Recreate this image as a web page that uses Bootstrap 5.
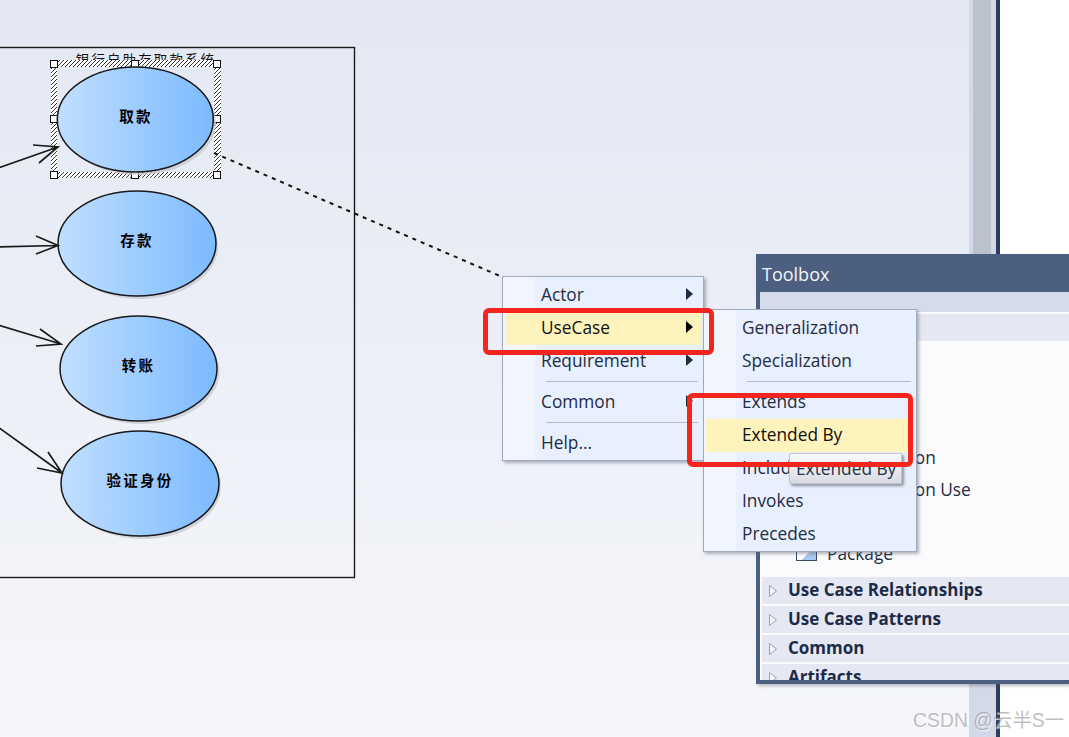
<!DOCTYPE html>
<html lang="zh">
<head>
<meta charset="utf-8">
<title>Toolbox</title>
<link href="https://cdn.jsdelivr.net/npm/bootstrap@5.3.0/dist/css/bootstrap.min.css" rel="stylesheet">
<style>
html,body{margin:0;height:100%;overflow:hidden;background:#fff}
.stage{width:1069px;height:737px;overflow:hidden;font-family:"Open Sans","Noto Sans",sans-serif;color:#1f2c46}
.canvas-pane{width:969px;background:linear-gradient(180deg,#e3e8f3 0%,#f6f7fb 100%)}
.scroll-pane{width:27px;background:#d3d9e8}
.scroll-thumb{width:18px;height:680px;margin-left:4px;background:#bcc2cd}
.dark-rule{width:4px;background:#2c3e5e}
.white-pane{background:#fff}
.diagram{left:0;top:0}
.ctx{background:linear-gradient(90deg,#f1f5fe 0,#f1f5fe var(--strip),#e8effd var(--strip));border:1px solid #a1aabc;box-shadow:2px 2px 3px rgba(90,95,110,.45);font-size:17.3px;padding:2px}
.ctx-one{left:502px;top:276px;width:202px;height:185px;--strip:32px}
.ctx-two{left:703px;top:309px;width:214px;height:243px;--strip:32px}
.ctx-item{height:33px;padding:0 8px 1px 36px;line-height:32px;white-space:nowrap}
.ctx-item.on{background:#fdf3bd;color:#101010}
.ctx-sep{height:8px;margin:0 3px 0 41px;padding-top:3px}
.ctx-sep::after{content:"";display:block;height:1px;background:#b4bbcb}
.ctx-arrow{width:0;height:0;margin-bottom:2px;border-left:7px solid #1f2c46;border-top:6.5px solid transparent;border-bottom:6.5px solid transparent}
.on .ctx-arrow{border-left-color:#000}
.mark-box{border:5px solid #f5241c;border-radius:6px}
.mark-a{left:483px;top:308px;width:231px;height:47px}
.mark-b{left:687px;top:393px;width:226px;height:74px}
.tip{left:789px;top:453px;width:113px;height:31px;background:linear-gradient(180deg,#fafafb,#d9dbe2);border:1px solid #c4c7cf;box-shadow:2px 2px 3px rgba(70,70,80,.55);font-size:17.3px;line-height:30px;padding-left:6px;color:#26324a;white-space:nowrap;border-radius:2px}
.toolbox{left:756px;top:254px;width:313px;height:430px;background:#4d5f80;box-shadow:2px 2px 3px rgba(90,95,110,.4);padding:0 0 4px 4px}
.tb-title{height:38px;color:#f2f4f8;font-size:18px;line-height:41px;padding-left:2px}
.tb-inner{background:#fbfbfd;overflow:hidden}
.tb-strip{height:20px;background:#d5dbe8;margin-bottom:2px}
.tb-band{height:27px;background:#e5e8f2;flex:none}
.tb-list{height:236px;flex:none;font-size:17.3px;padding-left:67px}
.tb-row{height:32px;line-height:32px;white-space:nowrap}
.tb-spacer{height:101px}
.tb-pkg{position:relative}
.tb-pkgicon{left:-31px;top:12px;width:21px;height:11px;border:1px solid #3c4a66;border-top:0;background:linear-gradient(135deg,#fff 50%,#a9c8ee 50%)}
.tb-group{height:27px;margin:0 0 2px 2px;padding:0 0 2px 7px;background:#e5e8f2;flex:none;font-weight:700;font-size:17px;color:#1c2b49;gap:11px;white-space:nowrap}
.tb-tri{width:8px;height:12px;flex:none;margin-top:2px}
.mark-wm{left:913px;top:706px;font-family:"Liberation Sans","Noto Sans CJK SC",sans-serif;font-size:19.4px;color:rgba(130,130,130,.5);text-shadow:1px 1px 1px rgba(255,255,255,.8);white-space:nowrap}
.uc-label{font-family:"Noto Sans CJK SC",sans-serif;font-weight:700;font-size:14.5px;letter-spacing:2.2px;text-anchor:middle;fill:#000}
.sys-label{font-family:"Noto Sans CJK SC",sans-serif;font-size:13.5px;letter-spacing:2.1px;text-anchor:middle;fill:#111}
</style>
</head>
<body>
<div class="stage position-relative d-flex">
  <div class="canvas-pane position-relative flex-shrink-0"></div>
  <div class="scroll-pane flex-shrink-0"><div class="scroll-thumb"></div></div>
  <div class="dark-rule flex-shrink-0"></div>
  <div class="white-pane flex-grow-1"></div>

  <svg class="diagram position-absolute" width="969" height="737" viewBox="0 0 969 737">
    <defs>
      <linearGradient id="ucg" x1="0" x2="1" y1="0" y2="0"><stop offset="0" stop-color="#c0dfff"/><stop offset="1" stop-color="#7cbaff"/></linearGradient>
      <pattern id="hatch" width="4" height="4" patternUnits="userSpaceOnUse"><rect width="4" height="4" fill="#fff"/><path d="M-1 1L1 -1M0 4L4 0M3 5L5 3" stroke="#222" stroke-width=".9"/></pattern>
    </defs>
    <rect x="-5" y="47.5" width="359.5" height="530" fill="none" stroke="#1a1a1a" stroke-width="1.4"/>
    <text class="sys-label" x="146" y="65">银行自助存取款系统</text>
    <path d="M51 60H221V178H51Z M57 67V172H214V67Z" fill="url(#hatch)" fill-rule="evenodd"/>
    <g fill="#fff" stroke="#111" stroke-width="1">
      <rect x="50.5" y="60.5" width="7" height="7"/><rect x="131.5" y="60.5" width="7" height="7"/><rect x="213.5" y="60.5" width="7" height="7"/>
      <rect x="50.5" y="115.5" width="7" height="7"/><rect x="213.5" y="115.5" width="7" height="7"/>
      <rect x="50.5" y="171.500" width="7" height="7"/><rect x="131.5" y="171.5" width="7" height="7"/><rect x="213.5" y="171.5" width="7" height="7"/>
    </g>
    <g fill="#c5c8ce" opacity=".7">
      <ellipse cx="138" cy="122.5" rx="78" ry="52.5"/><ellipse cx="140" cy="246.5" rx="78" ry="52.5"/><ellipse cx="141.5" cy="371.5" rx="78" ry="52.5"/><ellipse cx="143" cy="486.5" rx="78" ry="52.5"/>
    </g>
    <g fill="url(#ucg)" stroke="#1a1a1a" stroke-width="1.5">
      <ellipse cx="135.300" cy="119.5" rx="78" ry="52.5"/><ellipse cx="137" cy="243.5" rx="79" ry="52.5"/><ellipse cx="138.5" cy="368.5" rx="78.5" ry="52.5"/><ellipse cx="140" cy="483.5" rx="79" ry="52.5"/>
    </g>
    <text class="uc-label" x="136" y="122">取款</text>
    <text class="uc-label" x="137" y="246">存款</text>
    <text class="uc-label" x="138.5" y="371">转账</text>
    <text class="uc-label" x="140" y="486">验证身份</text>
    <g fill="none" stroke="#1a1a1a" stroke-width="1.7">
      <path d="M-2 168L58 147M33 145L58 147L39 163"/>
      <path d="M-2 247L58 245.500M36 236L58 245.500L36 254"/>
      <path d="M-2 325L61 344M40 329L61 344L36 346"/>
      <path d="M-2 427L62 473M48 452L62 473L37 468"/>
      <path d="M214 153L500 276" stroke="#111" stroke-width="2" stroke-dasharray="4 5"/>
    </g>
  </svg>

  <div class="toolbox position-absolute d-flex flex-column">
    <div class="tb-title flex-shrink-0">Toolbox</div>
    <div class="tb-inner flex-grow-1 d-flex flex-column">
      <div class="tb-strip flex-shrink-0"></div>
      <div class="tb-band"></div>
      <div class="tb-list">
        <div class="tb-spacer"></div>
        <div class="tb-row">Collaboration</div>
        <div class="tb-row">Collaboration Use</div>
        <div class="tb-row"></div>
        <div class="tb-row tb-pkg"><span class="tb-pkgicon position-absolute"></span>Package</div>
      </div>
      <div class="tb-group d-flex align-items-center"><svg class="tb-tri" viewBox="0 0 8 12"><path d="M.5.5L7.500 6L.5 11.500Z" fill="#f5f6fa" stroke="#9aa0ad"/></svg>Use Case Relationships</div>
      <div class="tb-group d-flex align-items-center"><svg class="tb-tri" viewBox="0 0 8 12"><path d="M.5.5L7.500 6L.5 11.500Z" fill="#f5f6fa" stroke="#9aa0ad"/></svg>Use Case Patterns</div>
      <div class="tb-group d-flex align-items-center"><svg class="tb-tri" viewBox="0 0 8 12"><path d="M.5.5L7.500 6L.5 11.500Z" fill="#f5f6fa" stroke="#9aa0ad"/></svg>Common</div>
      <div class="tb-group d-flex align-items-center"><svg class="tb-tri" viewBox="0 0 8 12"><path d="M.5.5L7.500 6L.5 11.500Z" fill="#f5f6fa" stroke="#9aa0ad"/></svg>Artifacts</div>
    </div>
  </div>

  <div class="ctx ctx-one position-absolute">
    <div class="ctx-item d-flex justify-content-between align-items-center"><span>Actor</span><i class="ctx-arrow"></i></div>
    <div class="ctx-item on d-flex justify-content-between align-items-center"><span>UseCase</span><i class="ctx-arrow"></i></div>
    <div class="ctx-item d-flex justify-content-between align-items-center"><span>Requirement</span><i class="ctx-arrow"></i></div>
    <div class="ctx-sep"></div>
    <div class="ctx-item d-flex justify-content-between align-items-center"><span>Common</span><i class="ctx-arrow"></i></div>
    <div class="ctx-sep"></div>
    <div class="ctx-item"><span>Help...</span></div>
  </div>

  <div class="ctx ctx-two position-absolute">
    <div class="ctx-item">Generalization</div>
    <div class="ctx-item">Specialization</div>
    <div class="ctx-sep"></div>
    <div class="ctx-item">Extends</div>
    <div class="ctx-item on">Extended By</div>
    <div class="ctx-item">Includes</div>
    <div class="ctx-item">Invokes</div>
    <div class="ctx-item">Precedes</div>
  </div>

  <div class="tip position-absolute">Extended By</div>
  <div class="mark-box mark-a position-absolute"></div>
  <div class="mark-box mark-b position-absolute"></div>
  <div class="mark-wm position-absolute">CSDN @云半S一</div>
</div>
<script src="https://cdn.jsdelivr.net/npm/bootstrap@5.3.0/dist/js/bootstrap.bundle.min.js"></script>
</body>
</html>
